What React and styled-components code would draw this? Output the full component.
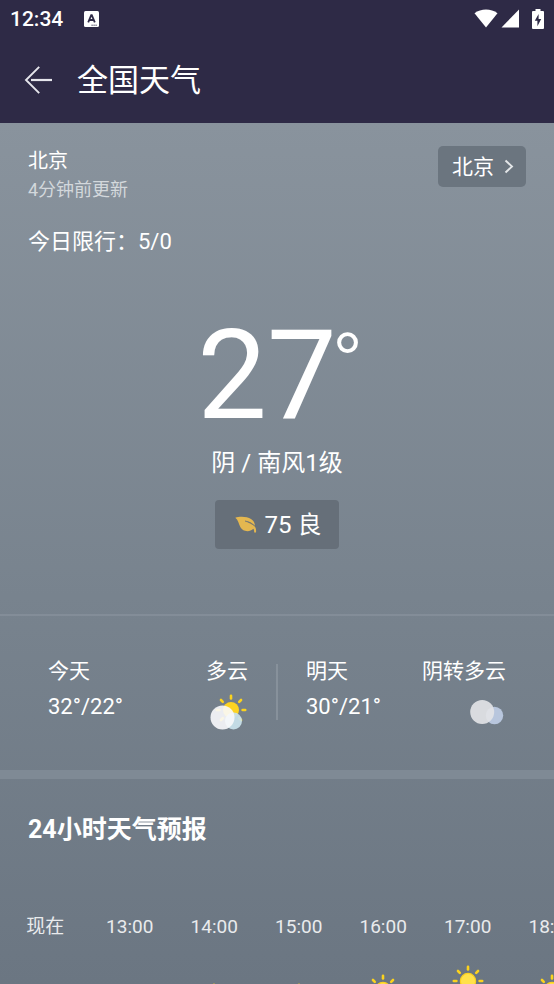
import styled, { createGlobalStyle } from "styled-components";

const GlobalStyle = createGlobalStyle`
  * {
    box-sizing: border-box;
  }

  body {
    margin: 0;
    background: #6d7883;
    color: #fff;
    font-family: Roboto, "Noto Sans CJK SC", sans-serif;
  }

  h1, h2, p {
    margin: 0;
    font-weight: 400;
  }
`;

const Screen = styled.div`
  display: flex;
  flex-direction: column;
  height: 100vh;
  overflow: hidden;
`;

const Header = styled.header`
  background: #2e2a46;
`;

const StatusBar = styled.div`
  display: flex;
  align-items: center;
  height: 37px;
  padding: 0 10px;

  .time {
    flex: 1;
    display: flex;
    align-items: center;
    gap: 21px;
    font-size: 21px;
    font-weight: 500;
  }

  .signals {
    display: flex;
    align-items: center;
  }

  .battery {
    margin-left: 12px;
  }
`;

const TitleBar = styled.div`
  display: flex;
  align-items: center;
  gap: 24px;
  height: 86px;
  padding: 0 24px;

  h1 {
    padding-top: 2px;
    font-size: 31px;
    line-height: 40px;
  }
`;

const BackButton = styled.button`
  display: flex;
  padding: 0;
  border: 0;
  background: none;
  color: #e6e6ec;
`;

const Content = styled.main`
  flex: 1;
  min-height: 0;
  overflow-y: auto;
  scrollbar-width: none;
  background: linear-gradient(#89939d, #78838e 55%, #6b7682);
`;

const Current = styled.section`
  height: 491px;
  padding: 23px 28px 0;
`;

const Location = styled.div`
  display: flex;
  justify-content: space-between;
  align-items: flex-start;

  .city {
    font-size: 20px;
    line-height: 30px;
  }

  .updated {
    color: #d3d8dc;
    font-size: 18px;
    line-height: 28px;
  }
`;

const CityButton = styled.button`
  display: flex;
  align-items: center;
  gap: 10px;
  height: 41px;
  padding: 0 12px 0 14px;
  border: 0;
  border-radius: 5px;
  background: #6b757f;
  color: #fff;
  font-family: inherit;
  font-size: 21px;
  line-height: 28px;
`;

const Limit = styled.p`
  margin-top: 23px;
  font-size: 22px;
  line-height: 30px;
`;

const Now = styled.div`
  display: flex;
  flex-direction: column;
  align-items: center;
  margin-top: 56px;

  .temperature {
    display: flex;
    align-items: flex-start;
    font-size: 124px;
    line-height: 126px;
  }

  .degree {
    width: 24px;
    margin-left: -4px;
    font-family: "Liberation Sans", sans-serif;
    font-size: 74px;
    line-height: 92px;
  }

  .summary {
    margin-top: 7px;
    font-size: 24px;
    line-height: 34px;
  }
`;

const AirQuality = styled.div`
  display: flex;
  align-items: center;
  gap: 8px;
  height: 49px;
  margin-top: 20px;
  padding: 0 18px 0 20px;
  border-radius: 4px;
  background: #666f79;
  font-size: 24px;
  line-height: 32px;
`;

const Days = styled.section`
  display: flex;
  align-items: flex-start;
  height: 165px;
  padding: 38px 48px 0;
  border-top: 2px solid #838d98;
  border-bottom: 9px solid #7f8a95;
  font-size: 21px;
  line-height: 35px;
`;

const Day = styled.div`
  flex: 1;
  display: flex;
  justify-content: space-between;

  .range {
    font-size: 22px;
  }

  .weather {
    display: flex;
    flex-direction: column;
    align-items: flex-end;
    gap: 2px;
  }
`;

const Divider = styled.div`
  width: 2px;
  height: 56px;
  margin: 10px 28px 0;
  background: #87919b;
`;

const Forecast = styled.section`
  padding: 33px 0 0;

  h2 {
    padding: 0 28px;
    font-size: 25px;
    font-weight: 700;
    line-height: 36px;
  }
`;

const Hours = styled.div`
  display: flex;
  height: 240px;
  margin-top: 66px;
  padding-left: 3px;
  overflow-x: auto;
  scrollbar-width: none;
`;

const Hour = styled.div`
  flex: 0 0 calc((100% - 44px) / 6);
  display: flex;
  flex-direction: column;
  align-items: center;
  color: #e9ebed;
  font-size: 19px;
  line-height: 26px;

  svg {
    flex: none;
    margin-top: ${(props) => 25 + (36 - props.$temp) * 9}px;
  }
`;

const hours = [
  { time: "现在", temp: 32 },
  { time: "13:00", temp: 33 },
  { time: "14:00", temp: 34 },
  { time: "15:00", temp: 34 },
  { time: "16:00", temp: 35 },
  { time: "17:00", temp: 36 },
  { time: "18:00", temp: 35 },
];

const rays = [0, 45, 90, 135, 180, 225, 270, 315];

const Rays = ({ cx, cy, from, to }) => (
  <g stroke="#fbd21e" strokeWidth="2.6" strokeLinecap="round">
    {rays.map((angle) => (
      <line
        key={angle}
        x1={cx}
        y1={cy - from}
        x2={cx}
        y2={cy - to}
        transform={`rotate(${angle} ${cx} ${cy})`}
      />
    ))}
  </g>
);

const SunIcon = () => (
  <svg width="32" height="32" viewBox="0 0 32 32">
    <Rays cx={16} cy={16} from={11.6} to={14.2} />
    <circle cx="16" cy="16" r="7.6" fill="#ffe14a" stroke="#fbd21e" strokeWidth="1.2" />
  </svg>
);

const CloudyIcon = () => (
  <svg width="40" height="40" viewBox="0 0 40 40">
    <Rays cx={23} cy={19} from={11.6} to={14.2} />
    <circle cx="23" cy="19" r="8" fill="#fdd321" />
    <circle cx="25.5" cy="30" r="8.5" fill="#c9e2ec" fillOpacity="0.93" />
    <circle cx="14.5" cy="26.5" r="12" fill="#fafafc" fillOpacity="0.9" />
  </svg>
);

const OvercastIcon = () => (
  <svg width="40" height="40" viewBox="0 0 40 40">
    <circle cx="28.5" cy="24.5" r="8.7" fill="#b8c6dd" />
    <circle cx="16.2" cy="21" r="12" fill="#e2e3e6" fillOpacity="0.92" />
  </svg>
);

const LeafIcon = () => (
  <svg width="22" height="18" viewBox="0 0 22 18">
    <path
      d="M0.3 1.8C4 0.2 12 0.2 16 3C19.2 5.2 20 7.4 19.8 10.4C21 12 21.3 14 21 16.6L19.2 16.6C19.2 15 19 13.8 18.4 12.8C16 15 13 15.6 10 14.8C5.5 13.6 4.3 8.6 3.3 6C2.6 4.2 1.6 2.8 0.3 1.8Z"
      fill="#e4b750"
    />
    <path d="M10 5C13.8 5.4 17.4 7.2 20 10.2C17.2 8 13.8 6.4 10 5Z" fill="#666f79" stroke="#666f79" strokeWidth="0.5" />
  </svg>
);

const App = () => {
  return (
    <Screen>
      <GlobalStyle />
      <Header>
        <StatusBar>
          <div className="time">
            <span>12:34</span>
            <svg width="15" height="16" viewBox="0 0 15 16">
              <rect width="15" height="16" rx="1.5" fill="#fff" />
              <path
                d="M4.2 11.3L7.2 4.2H7.8L10.8 11.3M5.4 9H9.6"
                fill="none"
                stroke="#2e2a46"
                strokeWidth="1.8"
              />
              <path d="M7.5 14.2H13.5" stroke="#2e2a46" strokeDasharray="1.2 0.8" />
            </svg>
          </div>
          <div className="signals">
            <svg width="24" height="19" viewBox="0 0 24 19">
              <path d="M0.5 4.2C7 -0.8 17 -0.8 23.5 4.2L12 18.5Z" fill="#fff" />
            </svg>
            <svg width="22" height="19" viewBox="0 0 22 19">
              <path d="M21 0.5V18.5H3.5Z" fill="#fff" />
            </svg>
            <svg className="battery" width="12" height="20" viewBox="0 0 12 20">
              <path
                d="M3.5 0H8.5V2H11Q12 2 12 3V19Q12 20 11 20H1Q0 20 0 19V3Q0 2 1 2H3.5Z"
                fill="#fff"
              />
              <path d="M6.6 5L2.8 11.8H5.4V17.2L9.2 10H6.6Z" fill="#2e2a46" />
            </svg>
          </div>
        </StatusBar>
        <TitleBar>
          <BackButton aria-label="返回">
            <svg width="29" height="28" viewBox="0 0 29 28" fill="none" stroke="currentColor">
              <path d="M15.2 0.8L2 14L15.2 27.2" strokeWidth="1.9" />
              <path d="M7 14H28" strokeWidth="2.2" />
            </svg>
          </BackButton>
          <h1>全国天气</h1>
        </TitleBar>
      </Header>

      <Content>
        <Current>
          <Location>
            <div>
              <p className="city">北京</p>
              <p className="updated">4分钟前更新</p>
            </div>
            <CityButton>
              北京
              <svg width="10" height="15" viewBox="0 0 10 15" fill="none">
                <path d="M1.5 1.5L8 7.5L1.5 13.5" stroke="#e3e6e8" strokeWidth="1.9" />
              </svg>
            </CityButton>
          </Location>
          <Limit>今日限行：5/0</Limit>
          <Now>
            <div className="temperature">
              27<span className="degree">°</span>
            </div>
            <p className="summary">阴 / 南风1级</p>
            <AirQuality>
              <LeafIcon />
              <p>75 良</p>
            </AirQuality>
          </Now>
        </Current>

        <Days>
          <Day>
            <div>
              <p>今天</p>
              <p className="range">32°/22°</p>
            </div>
            <div className="weather">
              <p>多云</p>
              <CloudyIcon />
            </div>
          </Day>
          <Divider />
          <Day>
            <div>
              <p>明天</p>
              <p className="range">30°/21°</p>
            </div>
            <div className="weather">
              <p>阴转多云</p>
              <OvercastIcon />
            </div>
          </Day>
        </Days>

        <Forecast>
          <h2>24小时天气预报</h2>
          <Hours>
            {hours.map((hour) => (
              <Hour key={hour.time} $temp={hour.temp}>
                <span>{hour.time}</span>
                <SunIcon />
              </Hour>
            ))}
          </Hours>
        </Forecast>
      </Content>
    </Screen>
  );
};

export default App;
